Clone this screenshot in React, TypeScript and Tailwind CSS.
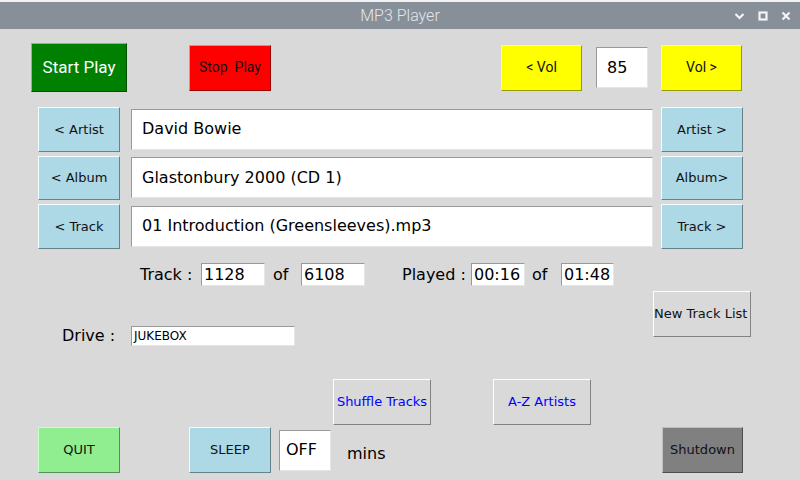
import type { ReactNode } from "react";

const dv = "font-['DejaVu_Sans',sans-serif]";
const rb = "font-['Roboto',sans-serif]";

function Btn({ className, children }: { className: string; children: ReactNode }) {
  return (
    <div className={`flex shrink-0 items-center justify-center overflow-hidden whitespace-pre border ${className}`}>
      {children}
    </div>
  );
}

function Entry({ className, children }: { className: string; children: ReactNode }) {
  return (
    <div
      className={`flex shrink-0 items-center overflow-hidden whitespace-pre border border-t-[#999999] border-l-[#999999] border-b-[#e6e6e6] border-r-[#e6e6e6] bg-white text-black ${className}`}
    >
      {children}
    </div>
  );
}

const blue = `h-full w-[82px] bg-[#add8e6] border-t-[#f2ffff] border-l-[#f2ffff] border-b-[#68828a] border-r-[#68828a] text-[13px] text-[#111] ${dv}`;
const yellow = `h-[46px] w-[81px] bg-[#ffff00] border-t-[#ffff7f] border-l-[#ffff7f] border-b-[#999900] border-r-[#999900] text-[14px] text-[#111] ${rb}`;
const plain = `h-[46px] w-[98px] bg-[#d9d9d9] border-t-white border-l-white border-b-[#828282] border-r-[#828282] text-[13px] ${dv}`;

function NavRow({ left, value, right }: { left: string; value: string; right: string }) {
  return (
    <div className="flex h-[44.5px] items-center pl-[38px]">
      <Btn className={blue}>{left}</Btn>
      <Entry className={`ml-[11px] h-[41px] w-[522px] pl-[10px] text-[16px] ${dv}`}>{value}</Entry>
      <Btn className={`ml-[8px] ${blue}`}>{right}</Btn>
    </div>
  );
}

export default function App() {
  return (
    <div className={`flex h-[480px] w-[800px] flex-col overflow-hidden bg-[#d9d9d9] text-black ${dv}`}>
      <div className="h-[2px] bg-[#f2f2f2]" />
      <div className="grid h-[27px] grid-cols-[1fr_auto_1fr] items-center bg-[#878f99]">
        <div />
        <div className={`text-[16px] font-light text-[#e3e6ea] ${rb}`}>MP3 Player</div>
        <div className="flex items-center justify-end gap-[13px] pr-[9px] text-[#f4f5f6]">
          <svg width="11" height="8" viewBox="0 0 11 8">
            <path d="M1.5 2 L5.5 6 L9.5 2" fill="none" stroke="currentColor" strokeWidth="2.2" />
          </svg>
          <svg width="10" height="10" viewBox="0 0 10 10">
            <rect x="1.5" y="1.5" width="7" height="7" fill="none" stroke="currentColor" strokeWidth="2.2" />
          </svg>
          <svg width="10" height="10" viewBox="0 0 10 10">
            <path d="M1.5 1.5 L8.5 8.5 M8.5 1.5 L1.5 8.5" fill="none" stroke="currentColor" strokeWidth="2.2" />
          </svg>
        </div>
      </div>

      {/* transport + volume */}
      <div className="mt-[14px] flex h-[49px] items-center pl-[31px]">
        <Btn className={`h-[49px] w-[96px] bg-[#008000] border-t-[#7fbf7f] border-l-[#7fbf7f] border-b-[#004d00] border-r-[#004d00] text-[17px] text-white ${rb}`}>
          Start Play
        </Btn>
        <Btn className={`ml-[62px] h-[46px] w-[82px] bg-[#ff0000] border-t-[#ff7f7f] border-l-[#ff7f7f] border-b-[#990000] border-r-[#990000] text-[14px] text-[#111] ${rb}`}>
          {"Stop  Play"}
        </Btn>
        <Btn className={`ml-[230px] ${yellow}`}>{"< Vol"}</Btn>
        <Entry className="ml-[14px] h-[41px] w-[52px] pl-[10px] text-[16px]">85</Entry>
        <Btn className={`ml-[13px] ${yellow}`}>{"Vol >"}</Btn>
      </div>

      {/* artist / album / track */}
      <div className="mt-[15px] flex flex-col gap-[4px]">
        <NavRow left="< Artist" value="David Bowie" right="Artist >" />
        <NavRow left="< Album" value="Glastonbury 2000 (CD 1)" right="Album>" />
        <NavRow left="< Track" value="01 Introduction (Greensleeves).mp3" right="Track >" />
      </div>

      {/* counters */}
      <div className="mt-[14.5px] flex h-[23px] items-center pl-[140px] text-[16px]">
        <span className="w-[61px]">Track :</span>
        <Entry className="h-[23px] w-[64px] pl-[2px] text-[16px]">1128</Entry>
        <span className="ml-[8px] w-[28px]">of</span>
        <Entry className="h-[23px] w-[64px] pl-[2px] text-[16px]">6108</Entry>
        <span className="ml-[37px] w-[69px]">Played :</span>
        <Entry className="h-[23px] w-[54px] pl-[2px] text-[16px]">00:16</Entry>
        <span className="ml-[7px] w-[29px]">of</span>
        <Entry className="h-[23px] w-[53px] pl-[2px] text-[16px]">01:48</Entry>
      </div>

      {/* drive + new list */}
      <div className="mt-[5px] flex items-start pl-[62px]">
        <div className="mt-[35px] flex h-[20px] items-center">
          <span className="w-[69px] text-[16px]">Drive :</span>
          <Entry className="h-[20px] w-[164px] pl-[2px] text-[12px]">JUKEBOX</Entry>
        </div>
        <Btn className={`ml-[358px] justify-start text-[#111] ${plain}`}>New Track List</Btn>
      </div>

      {/* shuffle / a-z */}
      <div className="mt-[33px] flex pl-[333px]">
        <Btn className={`text-[#0000ff] ${plain}`}>Shuffle Tracks</Btn>
        <Btn className={`ml-[62px] text-[#0000ff] ${plain}`}>A-Z Artists</Btn>
      </div>

      {/* bottom controls */}
      <div className="mt-[2px] flex h-[46px] items-center pl-[38px] pr-[57px]">
        <Btn className={`h-[46px] w-[82px] bg-[#90ee90] border-t-[#c9ffc9] border-l-[#c9ffc9] border-b-[#568f56] border-r-[#568f56] text-[13px] text-[#111]`}>
          QUIT
        </Btn>
        <Btn className={`ml-[69px] h-[46px] w-[82px] bg-[#add8e6] border-t-[#f2ffff] border-l-[#f2ffff] border-b-[#68828a] border-r-[#68828a] text-[13px] text-[#111]`}>
          SLEEP
        </Btn>
        <Entry className="ml-[8px] h-[41px] w-[52px] pl-[6px] text-[16px]">OFF</Entry>
        <span className="ml-[16px] mt-[7px] text-[16px]">mins</span>
        <Btn className="ml-auto h-[46px] w-[81px] bg-[#808080] border-t-[#bfbfbf] border-l-[#bfbfbf] border-b-[#4d4d4d] border-r-[#4d4d4d] text-[13px] text-[#111]">
          Shutdown
        </Btn>
      </div>
    </div>
  );
}
